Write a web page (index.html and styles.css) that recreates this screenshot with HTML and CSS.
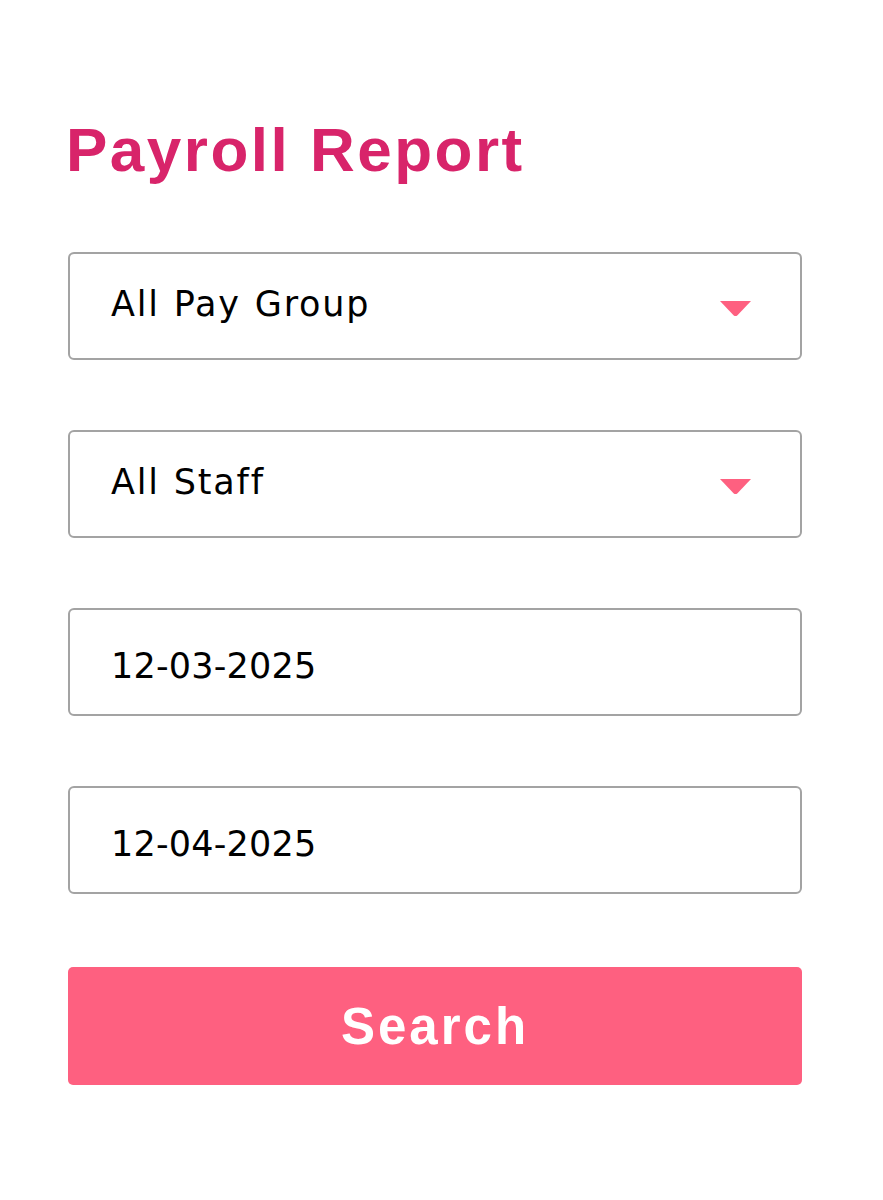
FILE: index.html
```html
<!DOCTYPE html>
<html lang="en">
<head>
<meta charset="utf-8">
<title>Payroll Report</title>
<link rel="stylesheet" href="styles.css">
</head>
<body>
<main class="page">
  <h1 class="title">Payroll Report</h1>
  <form class="form">
    <div class="field select">
      <span class="value">All Pay Group</span>
      <svg class="caret" width="33" height="17" viewBox="0 0 33 17"><path d="M1 1 H32 L18.5 15.2 Q16.5 17 14.5 15.2 Z" fill="#fe6080"/></svg>
    </div>
    <div class="field select">
      <span class="value">All Staff</span>
      <svg class="caret" width="33" height="17" viewBox="0 0 33 17"><path d="M1 1 H32 L18.5 15.2 Q16.5 17 14.5 15.2 Z" fill="#fe6080"/></svg>
    </div>
    <div class="field date">
      <span class="value">12-03-2025</span>
    </div>
    <div class="field date">
      <span class="value">12-04-2025</span>
    </div>
    <button type="button" class="search">Search</button>
  </form>
</main>
</body>
</html>
```

FILE: styles.css
```css
* { box-sizing: border-box; }
html, body { margin: 0; padding: 0; background: #ffffff; }
body { font-family: "Liberation Sans", Arial, sans-serif; color: #000; }
.page { width: 883px; padding: 112px 0 0 68px; }
.title {
  margin: 0 0 0 -2px;
  font-size: 62px;
  line-height: 76px;
  font-weight: 700;
  letter-spacing: 2.5px;
  color: #d8246a;
}
.form {
  margin-top: 64px;
  width: 734px;
  display: flex;
  flex-direction: column;
  gap: 70px;
}
.field {
  height: 108px;
  border: 2px solid #a3a3a3;
  border-radius: 6px;
  display: flex;
  align-items: center;
  justify-content: space-between;
  padding: 0 48px 0 41px;
}
.value {
  font-family: "DejaVu Sans", sans-serif;
  font-size: 35px;
  line-height: 40px;
}
.select .value { letter-spacing: 1.8px; word-spacing: 1px; margin-top: -4px; }
.date .value { letter-spacing: 0.2px; padding-top: 8px; }
.caret { display: block; margin-top: 4px; }
.search {
  margin-top: 3px;
  height: 118px;
  border: none;
  border-radius: 5px;
  background: #fe6080;
  color: #ffffff;
  font-family: "Liberation Sans", Arial, sans-serif;
  font-size: 51px;
  font-weight: 700;
  letter-spacing: 3px;
  padding: 0;
}
```
